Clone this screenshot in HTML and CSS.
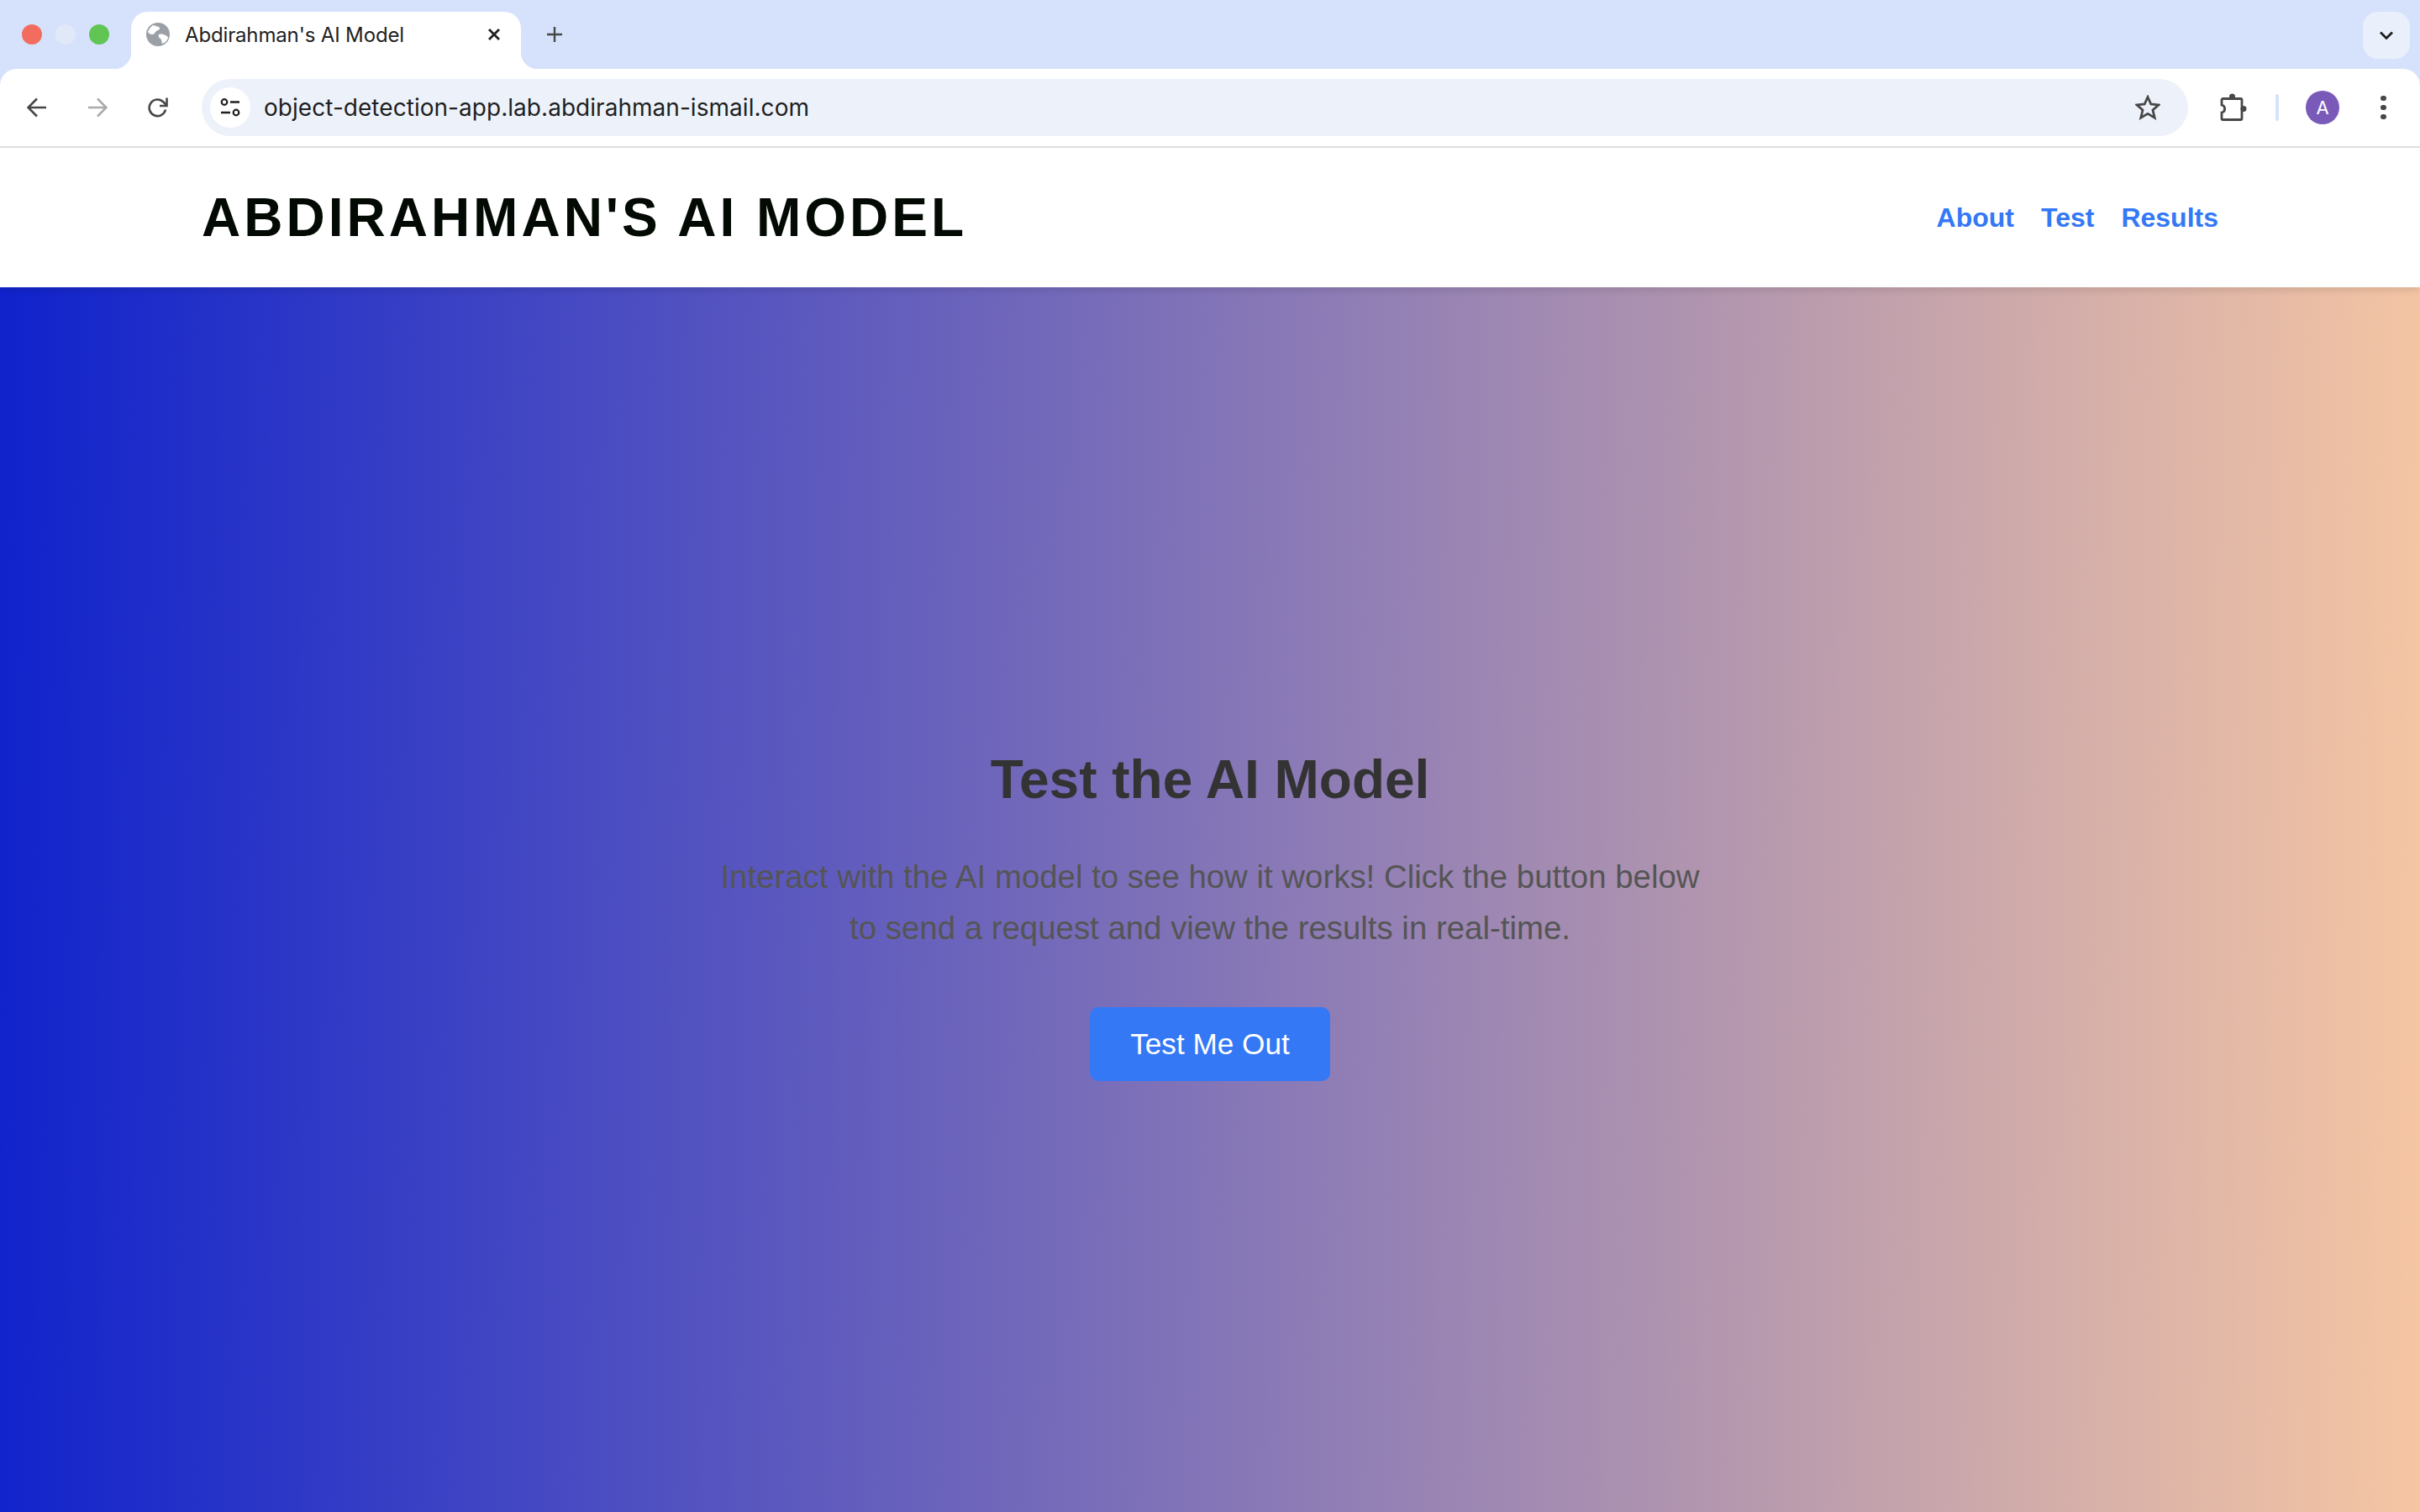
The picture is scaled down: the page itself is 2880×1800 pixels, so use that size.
FILE: index.html
```html
<!DOCTYPE html>
<html lang="en">
<head>
  <meta charset="UTF-8">
  <title>Abdirahman's AI Model</title>
  <link rel="stylesheet" href="styles.css">
</head>
<body>
  <div class="tabstrip">
    <div class="lights">
      <span class="light red"></span>
      <span class="light idle"></span>
      <span class="light green"></span>
    </div>
    <div class="tab">
      <svg class="favicon" viewBox="0 0 28 28">
        <circle cx="14" cy="14" r="14" fill="#9aa0a6"/>
        <path d="M8 3c3 1 6 1 8 3 1 2-2 3-4 4-2 2-2 4-5 4-2 0-4-1-5-3 1-3 3-6 6-8zM15 14c3-1 6 0 8 1 2 1 3 2 3 3-1 3-3 6-7 7-1-2 0-4-2-6-2-1-3-3-2-5z" fill="#fff"/>
      </svg>
      <span class="tab-title">Abdirahman's AI Model</span>
      <svg class="tab-close" viewBox="0 0 16 16"><path d="M2 2l12 12M14 2L2 14" stroke="#1f1f1f" stroke-width="2.8" fill="none"/></svg>
    </div>
    <svg class="new-tab" viewBox="0 0 20 20"><path d="M10 1v18M1 10h18" stroke="#474747" stroke-width="2.4" fill="none"/></svg>
    <div class="tab-search">
      <svg viewBox="0 0 16 10" class="chevron"><path d="M1 1.5l7 7 7-7" stroke="#1f1f1f" stroke-width="2.8" fill="none"/></svg>
    </div>
  </div>

  <div class="toolbar">
    <svg class="tool" viewBox="0 0 24 24"><path d="M23 12H2M12 1.500L1.500 12 12 22.500" stroke="#474747" stroke-width="2.6" fill="none"/></svg>
    <svg class="tool" viewBox="0 0 24 24"><path d="M1 12h21M12 1.500L22.500 12 12 22.500" stroke="#ababab" stroke-width="2.6" fill="none"/></svg>
    <svg class="tool" viewBox="0 0 24 24"><path d="M21 14.500A9.800 9.800 0 1 1 18.500 5.500L22.500 9.500" stroke="#474747" stroke-width="2.6" fill="none"/><path d="M22.500 0.500v9.500H14" stroke="#474747" stroke-width="2.6" fill="none"/></svg>
    <div class="omnibox">
      <div class="site-chip">
        <svg viewBox="0 0 24 24" class="tune">
          <circle cx="5" cy="5.500" r="3.300" stroke="#1f1f1f" stroke-width="2.2" fill="none"/>
          <path d="M12 5.500h11M1 18h11" stroke="#1f1f1f" stroke-width="2.4" fill="none"/>
          <circle cx="19" cy="18" r="3.300" stroke="#1f1f1f" stroke-width="2.2" fill="none"/>
        </svg>
      </div>
      <span class="url">object-detection-app.lab.abdirahman-ismail.com</span>
      <svg class="star" viewBox="0 0 30 30"><path d="M15 2.500L18.800 11 28 11.900 21 18 23.200 27.200 15 22.400 6.800 27.200 9 18 2 11.900 11.200 11z" stroke="#474747" stroke-width="2.8" fill="none"/></svg>
    </div>
    <svg class="puzzle" viewBox="0 0 34 34">
      <path d="M4.500 6.500H25.500a1.500 1.500 0 0 1 1.500 1.500V30a1.500 1.500 0 0 1-1.500 1.500H4.500A1.500 1.500 0 0 1 3 30V23a4.600 4.600 0 0 0 0-9V8a1.500 1.500 0 0 1 1.500-1.500z" stroke="#474747" stroke-width="2.8" fill="none"/>
      <circle cx="15.500" cy="4" r="3.500" fill="#474747"/>
      <circle cx="29" cy="18.500" r="3.500" fill="#474747"/>
    </svg>
    <span class="divider"></span>
    <div class="avatar">A</div>
    <div class="dots"><span></span><span></span><span></span></div>
  </div>

  <header class="site-header">
    <div class="site-header-inner">
      <h1 class="logo">ABDIRAHMAN'S AI MODEL</h1>
      <nav class="nav">
        <a href="#">About</a>
        <a href="#">Test</a>
        <a href="#">Results</a>
      </nav>
    </div>
  </header>

  <main class="hero">
    <h2>Test the AI Model</h2>
    <p>Interact with the AI model to see how it works! Click the button below to send a request and view the results in real-time.</p>
    <button type="button">Test Me Out</button>
  </main>
</body>
</html>
```

FILE: styles.css
```css
* {
  box-sizing: border-box;
}
html, body {
  margin: 0;
  height: 100%;
}
body {
  display: flex;
  flex-direction: column;
  font-family: "Liberation Sans", Arial, sans-serif;
  background-color: #d6e2fb;
  overflow: hidden;
}

/* browser chrome */
.tabstrip {
  display: flex;
  align-items: flex-end;
  height: 82px;
  background-color: #d6e2fb;
}
.lights {
  display: flex;
  gap: 16px;
  align-self: flex-start;
  margin: 29px 0 0 26px;
}
.light {
  width: 24px;
  height: 24px;
  border-radius: 50%;
}
.red { background-color: #f26d5f; }
.idle { background-color: #e1e8f8; }
.green { background-color: #61c554; }
.tab {
  position: relative;
  display: flex;
  align-items: center;
  width: 464px;
  height: 68px;
  margin-left: 26px;
  padding: 0 24px 14px 18px;
  background-color: #fff;
  border-radius: 20px 20px 0 0;
}
.tab::before, .tab::after {
  content: "";
  position: absolute;
  bottom: 0;
  width: 20px;
  height: 20px;
}
.tab::before {
  left: -20px;
  background: radial-gradient(circle at 0 0, #d6e2fb 20px, #fff 20.5px);
}
.tab::after {
  right: -20px;
  background: radial-gradient(circle at 100% 0, #d6e2fb 20px, #fff 20.5px);
}
.favicon {
  width: 28px;
  height: 28px;
}
.tab-title {
  flex: 1;
  margin-left: 18px;
  font-family: Inter, sans-serif;
  font-size: 24px;
  letter-spacing: -0.15px;
  color: #1f1f1f;
  white-space: nowrap;
}
.tab-close {
  width: 16px;
  height: 16px;
}
.new-tab {
  align-self: flex-start;
  width: 20px;
  height: 20px;
  margin: 31px 0 0 30px;
}
.tab-search {
  display: flex;
  align-items: center;
  justify-content: center;
  align-self: flex-start;
  width: 56px;
  height: 56px;
  margin: 14px 12px 0 auto;
  background-color: #e9f0fc;
  border-radius: 18px;
}
.chevron {
  width: 16px;
  height: 10px;
}
.toolbar {
  display: flex;
  align-items: center;
  height: 94px;
  padding-left: 32px;
  background-color: #fff;
  border-bottom: 2px solid #e1e1e1;
  border-radius: 20px 20px 0 0;
}
.tool {
  width: 24px;
  height: 24px;
  margin-right: 48px;
}
.toolbar .tool:nth-of-type(3) {
  margin-right: 40px;
}
.omnibox {
  display: flex;
  align-items: center;
  width: 2364px;
  height: 68px;
  padding: 0 33px 0 10px;
  background-color: #edf2fa;
  border-radius: 34px;
}
.site-chip {
  display: flex;
  align-items: center;
  justify-content: center;
  width: 48px;
  height: 48px;
  background-color: #fff;
  border-radius: 50%;
}
.tune {
  width: 24px;
  height: 24px;
}
.url {
  flex: 1;
  margin-left: 16px;
  font-family: Inter, sans-serif;
  font-size: 28px;
  letter-spacing: 0.04px;
  color: #1f1f1f;
  white-space: nowrap;
}
.star {
  width: 30px;
  height: 30px;
}
.puzzle {
  width: 34px;
  height: 34px;
  margin-left: 37px;
}
.divider {
  width: 4px;
  height: 32px;
  margin-left: 33px;
  background-color: #d6e2fb;
  border-radius: 2px;
}
.avatar {
  width: 40px;
  height: 40px;
  margin-left: 32px;
  background-color: #7a5ab8;
  border-radius: 50%;
  color: #fff;
  font-family: Inter, sans-serif;
  font-size: 22px;
  line-height: 40px;
  text-align: center;
}
.dots {
  display: flex;
  flex-direction: column;
  gap: 4.5px;
  margin-left: 49px;
}
.dots span {
  width: 6.5px;
  height: 6.5px;
  background-color: #474747;
  border-radius: 50%;
}

/* page */
.site-header {
  position: relative;
  height: 166px;
  background-color: #fff;
  box-shadow: 0 4px 8px rgba(0, 0, 0, 0.1);
}
.site-header-inner {
  display: flex;
  align-items: center;
  justify-content: space-between;
  max-width: 2400px;
  height: 100%;
  margin: 0 auto;
}
.logo {
  margin: 0;
  font-size: 64px;
  font-weight: 700;
  letter-spacing: 4px;
  color: #030a04;
}
.nav {
  display: flex;
  gap: 32px;
}
.nav a {
  font-size: 32px;
  font-weight: 700;
  color: #3478f6;
  text-decoration: none;
}
.hero {
  flex: 1;
  display: flex;
  flex-direction: column;
  align-items: center;
  justify-content: center;
  padding-top: 36px;
  text-align: center;
  background: linear-gradient(91deg, #1023cc, #f6c6a3);
}
.hero h2 {
  margin: 0 0 48px;
  font-size: 64px;
  color: #333;
}
.hero p {
  width: 1200px;
  margin: 0 0 64px;
  font-size: 38.4px;
  line-height: 1.6;
  color: #555;
}
.hero button {
  padding: 24px 48px;
  background-color: #3478f6;
  border: none;
  border-radius: 10px;
  color: #fff;
  font-family: inherit;
  font-size: 35.2px;
  cursor: pointer;
}
```
